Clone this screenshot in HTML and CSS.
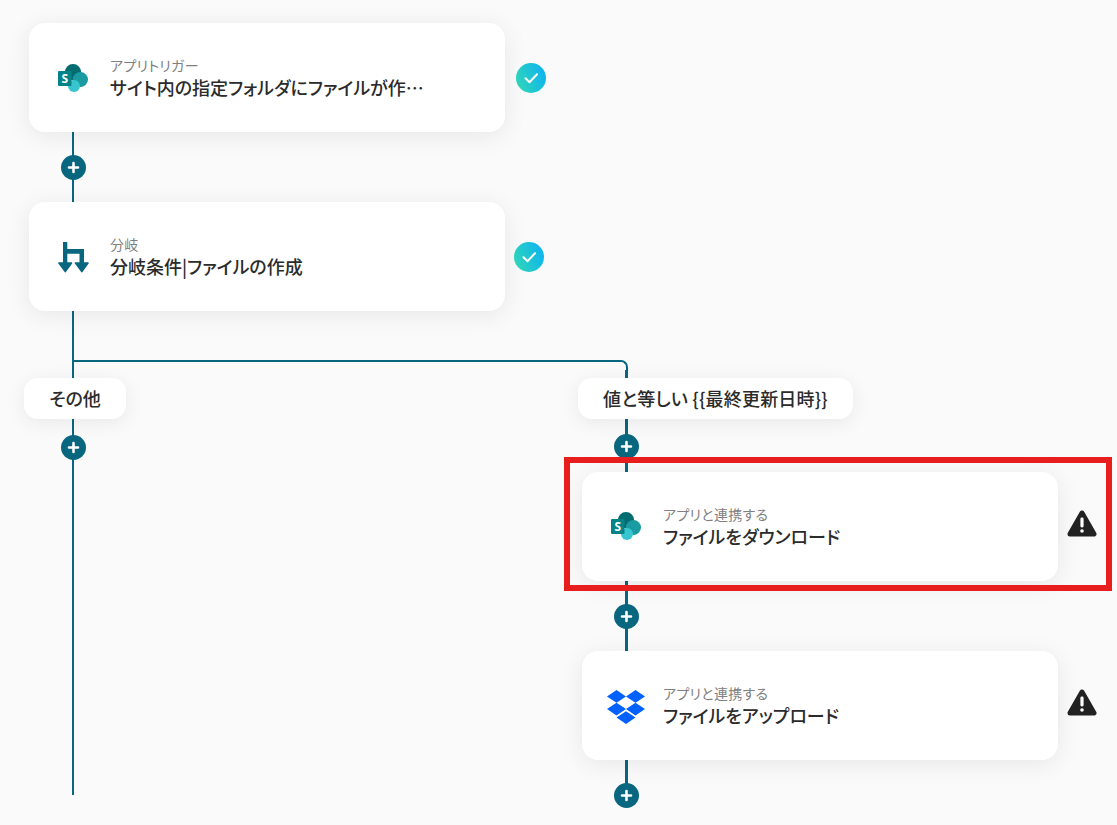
FILE: index.html
```html
<!DOCTYPE html>
<html lang="ja">
<head>
<meta charset="utf-8">
<title>フロー</title>
<link rel="stylesheet" href="styles.css">
</head>
<body>
<svg class="defs" width="0" height="0" aria-hidden="true">
  <defs>
    <symbol id="sp" viewBox="0 0 30 28">
      <circle cx="15" cy="8.2" r="8.2" fill="#036c70"/>
      <circle cx="22.4" cy="15.5" r="7.6" fill="#1a9ba1"/>
      <circle cx="16" cy="22" r="6" fill="#37c6d0"/>
      <rect x="0" y="7" width="13.5" height="15" rx="1" fill="#038387"/>
      <text x="6.7" y="19" class="sp-s">S</text>
    </symbol>
    <symbol id="warn" viewBox="0 0 30 27">
      <path d="M15 3 L27 24 L3 24 Z" fill="#222" stroke="#222" stroke-width="5" stroke-linejoin="round"/>
      <rect x="13.4" y="7.5" width="3.2" height="10" rx="1.4" fill="#fff"/>
      <circle cx="15" cy="21" r="1.8" fill="#fff"/>
    </symbol>
    <symbol id="plus" viewBox="0 0 25 25">
      <circle cx="12.5" cy="12.5" r="12.5" fill="#08677f"/>
      <path d="M12.5 8v9M8 12.5h9" stroke="#fff" stroke-width="2.6" stroke-linecap="round"/>
    </symbol>
    <symbol id="check" viewBox="0 0 30 30">
      <circle cx="15" cy="15" r="15" fill="url(#chk)"/>
      <path d="M9.5 15.2l4 4 7.5-8" fill="none" stroke="#fff" stroke-width="2" stroke-linecap="round" stroke-linejoin="round"/>
    </symbol>
    <linearGradient id="chk" x1="0" y1="0.7" x2="1" y2="0.3">
      <stop offset="0" stop-color="#2fd6b8"/>
      <stop offset="1" stop-color="#0db4f0"/>
    </linearGradient>
  </defs>
</svg>

<main class="canvas">
  <div class="line line-left"></div>
  <div class="line line-branch"></div>
  <div class="line line-right"></div>

  <article class="card card-1">
    <svg class="icon-sp"><use href="#sp"/></svg>
    <div class="card-text">
      <p class="label">アプリトリガー</p>
      <p class="title title-cut">サイト内の指定フォルダにファイルが作…</p>
    </div>
  </article>
  <svg class="check check-1"><use href="#check"/></svg>
  <svg class="plus plus-1"><use href="#plus"/></svg>

  <article class="card card-2">
    <svg class="icon-branch" viewBox="0 0 31 31">
      <path d="M5 0h4.3v7H26v14.5h-4.5V11.7H9.3v9.8H5z" fill="#08677f"/>
      <path d="M1 21h12.5l-6.2 8.6zM17.5 21H30l-6.2 8.6z" fill="#08677f" stroke="#08677f" stroke-width="1.6" stroke-linejoin="round"/>
    </svg>
    <div class="card-text">
      <p class="label">分岐</p>
      <p class="title">分岐条件|ファイルの作成</p>
    </div>
  </article>
  <svg class="check check-2"><use href="#check"/></svg>

  <div class="pill pill-other">その他</div>
  <div class="pill pill-equal">値と等しい {{最終更新日時}}</div>
  <svg class="plus plus-2"><use href="#plus"/></svg>
  <svg class="plus plus-3"><use href="#plus"/></svg>

  <article class="card card-3">
    <svg class="icon-sp"><use href="#sp"/></svg>
    <div class="card-text">
      <p class="label">アプリと連携する</p>
      <p class="title">ファイルをダウンロード</p>
    </div>
  </article>
  <svg class="warn warn-1"><use href="#warn"/></svg>
  <svg class="plus plus-4"><use href="#plus"/></svg>

  <article class="card card-4">
    <svg class="icon-dropbox" viewBox="0 1.8 24 20.4" preserveAspectRatio="none">
      <path fill="#0061ff" d="M6 1.807L0 5.629l6 3.822 6.001-3.822L6 1.807zM18 1.807l-6 3.822 6 3.822 6-3.822-6-3.822zM0 13.274l6 3.822 6.001-3.822L6 9.452l-6 3.822zM18 9.452l-6 3.822 6 3.822 6-3.822-6-3.822zM6 18.371l6.001 3.822 6-3.822-6-3.822L6 18.371z"/>
    </svg>
    <div class="card-text">
      <p class="label">アプリと連携する</p>
      <p class="title">ファイルをアップロード</p>
    </div>
  </article>
  <svg class="warn warn-2"><use href="#warn"/></svg>
  <svg class="plus plus-5"><use href="#plus"/></svg>

  <div class="highlight"></div>
</main>
</body>
</html>
```
FILE: styles.css
```css
* { box-sizing: border-box; }
html, body { margin: 0; padding: 0; }
body {
  background: #fafafa;
  font-family: "Noto Sans CJK JP", "Noto Sans", sans-serif;
  font-feature-settings: "palt";
  color: #2b2b2b;
  overflow: hidden;
}
p { margin: 0; }
.defs { position: absolute; }
.sp-s {
  font-family: "Open Sans", "Noto Sans", sans-serif;
  font-size: 12px;
  font-weight: 700;
  fill: #fff;
  text-anchor: middle;
}

.canvas { position: relative; width: 1117px; height: 825px; overflow: hidden; }

.line { position: absolute; }
.line-left { left: 72px; top: 130px; width: 2px; height: 665px; background: #08677f; }
.line-right { left: 625px; top: 370px; width: 2.5px; height: 425px; background: #08677f; }
.line-branch {
  left: 73px; top: 360px; width: 554.5px; height: 18px;
  border-top: 2px solid #08677f;
  border-right: 2.5px solid #08677f;
  border-top-right-radius: 7px;
}

.card {
  position: absolute;
  width: 476px;
  height: 109px;
  background: #fff;
  border-radius: 16px;
  box-shadow: 0 4px 24px rgba(0, 0, 0, 0.08);
  display: flex;
  align-items: center;
}
.card-1 { left: 29px; top: 23px; }
.card-2 { left: 29px; top: 202px; }
.card-3 { left: 582px; top: 472px; }
.card-4 { left: 582px; top: 651px; }

.card-text { display: flex; flex-direction: column; gap: 0; position: absolute; left: 81px; top: 32px; width: 330px; }
.label { font-size: 14px; line-height: 20px; color: #808080; letter-spacing: 0.3px; }
.title {
  font-size: 18px; line-height: 25px; font-weight: 500; color: #2b2b2b;
  white-space: nowrap;
}

.icon-sp { position: absolute; left: 29px; top: 41px; width: 30px; height: 28px; }
.card-3 .icon-sp { top: 40px; }
.icon-branch { position: absolute; left: 29px; top: 40px; width: 31px; height: 31px; }
.icon-dropbox { position: absolute; left: 25px; top: 39px; width: 38px; height: 34px; }

.check { position: absolute; width: 30px; height: 30px; }
.check-1 { left: 516px; top: 63px; }
.check-2 { left: 514px; top: 242px; }

.plus { position: absolute; width: 25px; height: 25px; }
.plus-1 { left: 60.5px; top: 154.5px; }
.plus-2 { left: 60.5px; top: 434.5px; }
.plus-3 { left: 613.5px; top: 433.5px; }
.plus-4 { left: 613.5px; top: 603.5px; }
.plus-5 { left: 613.5px; top: 782.5px; }

.warn { position: absolute; width: 30px; height: 27px; }
.warn-1 { left: 1067px; top: 510px; }
.warn-2 { left: 1067px; top: 689px; }

.pill {
  position: absolute;
  top: 378px;
  height: 41px;
  background: #fff;
  border-radius: 14px;
  box-shadow: 0 4px 20px rgba(0, 0, 0, 0.07);
  font-size: 18px;
  font-weight: 500;
  line-height: 41px;
  text-align: center;
  white-space: nowrap;
}
.pill-other { left: 24px; width: 102px; }
.pill-equal { left: 578px; width: 275px; letter-spacing: 0.2px; }

.highlight {
  position: absolute;
  left: 564px;
  top: 457px;
  width: 548px;
  height: 134px;
  border: 6px solid #e81e1e;
}
```
